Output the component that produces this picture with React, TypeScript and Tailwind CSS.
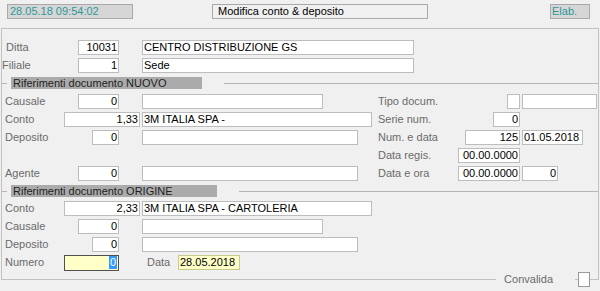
import React from 'react';

// legacy form: "Modifica conto & deposito"

type BoxProps = { className: string; value?: string; right?: boolean; tone?: 'white' | 'yellow' };

function Box({ className, value = '', right = false, tone = 'white' }: BoxProps) {
  return (
    <div
      className={
        'h-[15px] shrink-0 border flex items-center overflow-hidden whitespace-nowrap leading-none ' +
        (tone === 'yellow' ? 'bg-[#ffffc8] border-[#c9c98f] ' : 'bg-white border-[#bdbdbd] ') +
        (right ? 'justify-end pr-[1px] ' : 'pl-[1px] ') +
        className
      }
    >
      {value}
    </div>
  );
}

function Label({ className, children }: { className: string; children: React.ReactNode }) {
  return <span className={'shrink-0 text-[#6b6b6b] leading-none whitespace-nowrap ' + className}>{children}</span>;
}

function SectionHeader({ title, className }: { title: string; className: string }) {
  return (
    <div className="flex items-center h-[12px]">
      <div className="w-[5px] h-px bg-[#b5b5b5]" />
      <div className={'ml-[4px] h-[12px] bg-[#ababab] text-[#1e1e1e] pl-[2px] flex items-center leading-none whitespace-nowrap ' + className}>
        {title}
      </div>
      <div className="ml-[22px] flex-1 h-px bg-[#b5b5b5]" />
    </div>
  );
}

export default function App() {
  return (
    <div className="w-[600px] h-[291px] bg-[#f0f0f0] font-['Liberation_Sans',Arial,sans-serif] text-[11px] text-black overflow-hidden">
      {/* top bar */}
      <div className="h-[28px] pt-[4px] flex items-start">
        <div className="ml-[7px] w-[126px] h-[15px] bg-[#d6d6d6] border border-[#a9a9a9] text-[#2f9696] pl-[2px] flex items-center leading-none">
          28.05.18 09:54:02
        </div>
        <div className="ml-[79px] w-[216px] h-[15px] bg-[#f0f0f0] border border-[#a9a9a9] pl-[5px] flex items-center leading-none">
          Modifica conto &amp; deposito
        </div>
        <div className="ml-[122px] w-[40px] h-[15px] bg-[#d6d6d6] border border-[#a9a9a9] text-[#2f9696] pl-[1px] flex items-center leading-none">
          Elab.
        </div>
      </div>

      {/* main frame */}
      <div className="ml-[1px] w-[598px] h-[252px] border border-[#c2c2c2] flex flex-col">
        <div className="mt-[11px] flex items-center h-[15px]">
          <Label className="ml-[4px] w-[72px]">Ditta</Label>
          <Box className="w-[41px]" value="10031" right />
          <Box className="ml-[23px] w-[272px]" value="CENTRO DISTRIBUZIONE GS" />
        </div>
        <div className="mt-[3px] flex items-center h-[15px]">
          <Label className="ml-[0px] w-[76px]">Filiale</Label>
          <Box className="w-[41px]" value="1" right />
          <Box className="ml-[23px] w-[272px]" value="Sede" />
        </div>

        <div className="mt-[4px]">
          <SectionHeader title="Riferimenti documento NUOVO" className="w-[191px]" />
        </div>

        {/* NUOVO rows */}
        <div className="mt-[5px] flex items-center h-[15px]">
          <div className="w-[376px] flex items-center">
            <Label className="ml-[3px] w-[73px]">Causale</Label>
            <Box className="w-[41px]" value="0" right />
            <Box className="ml-[23px] w-[181px]" />
          </div>
          <Label className="w-[129px]">Tipo docum.</Label>
          <Box className="w-[13px]" />
          <Box className="ml-[2px] w-[75px]" />
        </div>
        <div className="mt-[3px] flex items-center h-[15px]">
          <div className="w-[376px] flex items-center">
            <Label className="ml-[3px] w-[59px]">Conto</Label>
            <Box className="w-[76px]" value="1,33" right />
            <Box className="ml-[2px] w-[230px]" value="3M ITALIA SPA -" />
          </div>
          <Label className="w-[115px]">Serie num.</Label>
          <Box className="w-[27px]" value="0" right />
        </div>
        <div className="mt-[3px] flex items-center h-[15px]">
          <div className="w-[376px] flex items-center">
            <Label className="ml-[3px] w-[87px]">Deposito</Label>
            <Box className="w-[27px]" value="0" right />
            <Box className="ml-[23px] w-[216px]" />
          </div>
          <Label className="w-[87px]">Num. e data</Label>
          <Box className="w-[55px]" value="125" right />
          <Box className="ml-[2px] w-[61px]" value="01.05.2018" />
        </div>
        <div className="mt-[3px] flex items-center h-[15px]">
          <div className="w-[376px]" />
          <Label className="w-[80px]">Data regis.</Label>
          <Box className="w-[62px]" value="00.00.0000" right />
        </div>
        <div className="mt-[3px] flex items-center h-[15px]">
          <div className="w-[376px] flex items-center">
            <Label className="ml-[3px] w-[73px]">Agente</Label>
            <Box className="w-[41px]" value="0" right />
            <Box className="ml-[23px] w-[216px]" />
          </div>
          <Label className="w-[80px]">Data e ora</Label>
          <Box className="w-[62px]" value="00.00.0000" right />
          <Box className="ml-[2px] w-[36px]" value="0" right />
        </div>

        <div className="mt-[4px]">
          <SectionHeader title="Riferimenti documento ORIGINE" className="w-[206px]" />
        </div>

        {/* ORIGINE rows */}
        <div className="mt-[4px] flex items-center h-[15px]">
          <Label className="ml-[3px] w-[59px]">Conto</Label>
          <Box className="w-[76px]" value="2,33" right />
          <Box className="ml-[2px] w-[230px]" value="3M ITALIA SPA - CARTOLERIA" />
        </div>
        <div className="mt-[3px] flex items-center h-[15px]">
          <Label className="ml-[3px] w-[73px]">Causale</Label>
          <Box className="w-[41px]" value="0" right />
          <Box className="ml-[23px] w-[181px]" />
        </div>
        <div className="mt-[3px] flex items-center h-[15px]">
          <Label className="ml-[3px] w-[87px]">Deposito</Label>
          <Box className="w-[27px]" value="0" right />
          <Box className="ml-[23px] w-[216px]" />
        </div>
        <div className="mt-[3px] flex items-center h-[15px]">
          <Label className="ml-[3px] w-[59px]">Numero</Label>
          <div className="h-[16px] w-[55px] bg-[#ffffc8] border border-[#4f4f4f] flex items-center justify-end pr-[1px] leading-none">
            <span className="bg-[#3399ff] text-white px-[1px] h-[13px] flex items-center">0</span>
          </div>
          <Label className="ml-[28px] w-[31px]">Data</Label>
          <Box className="w-[62px]" value="28.05.2018" tone="yellow" />
        </div>
      </div>

      {/* bottom edge: Convalida caption sits on the frame line */}
      <div className="relative -mt-[8px] h-[15px] flex items-center justify-end pr-[10px]">
        <span className="bg-[#f0f0f0] text-[#6b6b6b] pl-[8px] pr-[22px] leading-none h-[15px] flex items-center">Convalida</span>
        <div className="w-[3px]" />
        <div className="w-[12px] h-[15px] bg-white border border-[#9a9a9a]" />
      </div>
    </div>
  );
}
